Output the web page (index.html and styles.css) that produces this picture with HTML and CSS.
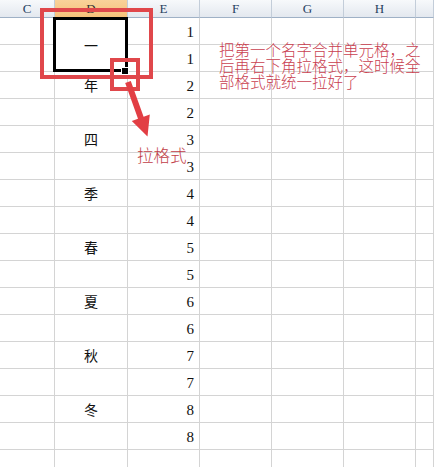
FILE: index.html
```html
<!DOCTYPE html>
<html lang="zh">
<head>
<meta charset="utf-8">
<link rel="stylesheet" href="styles.css">
</head>
<body>
<div class="sheet">
  <div class="grid">
    <div class="hd">C</div><div class="hd sel">D</div><div class="hd">E</div><div class="hd">F</div><div class="hd">G</div><div class="hd">H</div><div class="hd"></div>

    <div class="c"></div><div class="c ch merged">一</div><div class="c num">1</div><div class="c"></div><div class="c"></div><div class="c"></div><div class="c"></div>
    <div class="c"></div><div class="c num">1</div><div class="c"></div><div class="c"></div><div class="c"></div><div class="c"></div>
    <div class="c"></div><div class="c ch">年</div><div class="c num">2</div><div class="c"></div><div class="c"></div><div class="c"></div><div class="c"></div>
    <div class="c"></div><div class="c ch"></div><div class="c num">2</div><div class="c"></div><div class="c"></div><div class="c"></div><div class="c"></div>
    <div class="c"></div><div class="c ch">四</div><div class="c num">3</div><div class="c"></div><div class="c"></div><div class="c"></div><div class="c"></div>
    <div class="c"></div><div class="c ch"></div><div class="c num">3</div><div class="c"></div><div class="c"></div><div class="c"></div><div class="c"></div>
    <div class="c"></div><div class="c ch">季</div><div class="c num">4</div><div class="c"></div><div class="c"></div><div class="c"></div><div class="c"></div>
    <div class="c"></div><div class="c ch"></div><div class="c num">4</div><div class="c"></div><div class="c"></div><div class="c"></div><div class="c"></div>
    <div class="c"></div><div class="c ch">春</div><div class="c num">5</div><div class="c"></div><div class="c"></div><div class="c"></div><div class="c"></div>
    <div class="c"></div><div class="c ch"></div><div class="c num">5</div><div class="c"></div><div class="c"></div><div class="c"></div><div class="c"></div>
    <div class="c"></div><div class="c ch">夏</div><div class="c num">6</div><div class="c"></div><div class="c"></div><div class="c"></div><div class="c"></div>
    <div class="c"></div><div class="c ch"></div><div class="c num">6</div><div class="c"></div><div class="c"></div><div class="c"></div><div class="c"></div>
    <div class="c"></div><div class="c ch">秋</div><div class="c num">7</div><div class="c"></div><div class="c"></div><div class="c"></div><div class="c"></div>
    <div class="c"></div><div class="c ch"></div><div class="c num">7</div><div class="c"></div><div class="c"></div><div class="c"></div><div class="c"></div>
    <div class="c"></div><div class="c ch">冬</div><div class="c num">8</div><div class="c"></div><div class="c"></div><div class="c"></div><div class="c"></div>
    <div class="c"></div><div class="c ch"></div><div class="c num">8</div><div class="c"></div><div class="c"></div><div class="c"></div><div class="c"></div>
    <div class="c"></div><div class="c"></div><div class="c"></div><div class="c"></div><div class="c"></div><div class="c"></div><div class="c"></div>
    <div class="c"></div><div class="c"></div><div class="c"></div><div class="c"></div><div class="c"></div><div class="c"></div><div class="c"></div>
  </div>

  <div class="selbox"></div>
  <div class="handle"></div>

  <svg class="marks" width="434" height="467" viewBox="0 0 434 467">
    <rect x="42" y="10" width="109" height="67" fill="none" stroke="#e0474b" stroke-width="4"/>
    <rect x="112" y="60" width="26" height="29" fill="none" stroke="#e0474b" stroke-width="4"/>
    <polygon points="130.8,81 143.6,116.8 149.8,114.6 147.5,136.6 131.8,121 138,118.8 125.2,83" fill="#e23e44"/>
  </svg>

  <div class="note">把第一个名字合并单元格，之<br>后再右下角拉格式，这时候全<br>部格式就统一拉好了</div>
  <div class="label">拉格式</div>
</div>
</body>
</html>
```

FILE: styles.css
```css
html, body {
  margin: 0;
  padding: 0;
  background: #ffffff;
}

.sheet {
  position: relative;
  width: 434px;
  height: 467px;
  overflow: hidden;
}

.grid {
  display: grid;
  grid-template-columns: 55px 73px 72px 72px 72px 72px 1fr;
  grid-template-rows: 18px repeat(16, 27px) 18px 18px 18px;
}

.grid > div {
  box-sizing: border-box;
  border-right: 1px solid #d4d4d4;
  border-bottom: 1px solid #d4d4d4;
}

.hd {
  background: linear-gradient(#f7f9fb, #e3e8ef);
  border-right: 1px solid #c3cdd9 !important;
  border-bottom: 1px solid #9fb1c6 !important;
  font-family: "Liberation Serif", "DejaVu Serif", serif;
  font-size: 13px;
  color: #27415f;
  display: flex;
  align-items: center;
  justify-content: center;
  padding-top: 1px;
}

.hd.sel {
  background: linear-gradient(#f9d29a, #f6c17a);
  color: #333;
}

.c {
  display: flex;
  align-items: center;
}

.ch {
  justify-content: center;
  font-family: "Noto Sans CJK SC", sans-serif;
  font-size: 14px;
  color: #111;
}

.merged {
  grid-row: span 2;
}

.num {
  justify-content: flex-end;
  padding-right: 5px;
  padding-top: 3px;
  font-family: "Liberation Serif", "DejaVu Serif", serif;
  font-size: 15px;
  color: #111;
}

.selbox {
  position: absolute;
  left: 53px;
  top: 17px;
  width: 75px;
  height: 55px;
  box-sizing: border-box;
  border: 3px solid #000;
}

.handle {
  position: absolute;
  left: 121px;
  top: 67px;
  width: 6px;
  height: 6px;
  background: #000;
  border: 1px solid #fff;
}

.marks {
  position: absolute;
  left: 0;
  top: 0;
}

.note {
  position: absolute;
  left: 219px;
  top: 41px;
  font-family: "Noto Sans CJK SC", sans-serif;
  font-size: 15.5px;
  font-weight: 300;
  line-height: 16px;
  color: #c9404f;
  white-space: nowrap;
}

.label {
  position: absolute;
  left: 137px;
  top: 146px;
  font-family: "Noto Sans CJK SC", sans-serif;
  font-size: 16.5px;
  font-weight: 300;
  line-height: 18px;
  color: #c13d47;
  white-space: nowrap;
}
```
